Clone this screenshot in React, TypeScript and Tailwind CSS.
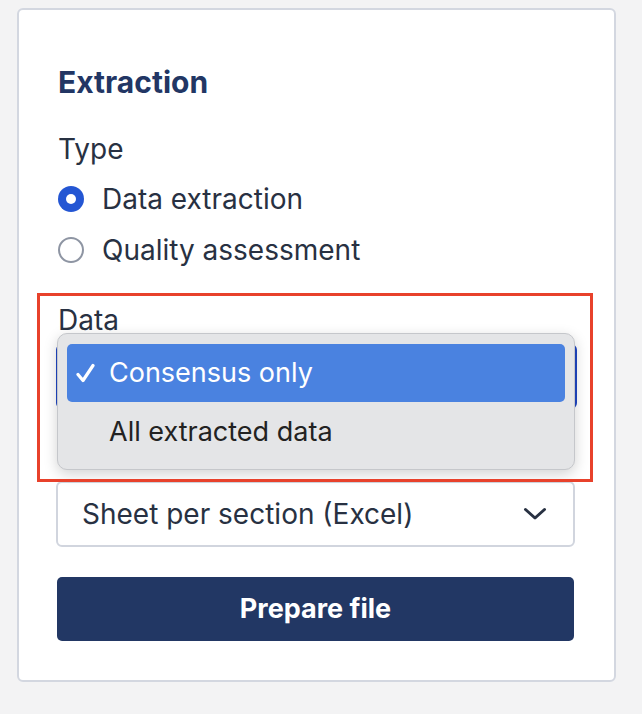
const font = { fontFamily: "Inter, 'Noto Sans', sans-serif" };

function Radio({ checked, label }: { checked?: boolean; label: string }) {
  return (
    <label className="flex items-center gap-[18px] h-[51px]">
      {checked ? (
        <span className="w-[26px] h-[26px] rounded-full bg-[#2456d3] flex items-center justify-center shrink-0">
          <span className="w-[10px] h-[10px] rounded-full bg-white" />
        </span>
      ) : (
        <span className="w-[26px] h-[26px] rounded-full border-2 border-[#8e95a3] bg-white shrink-0" />
      )}
      <span className="text-[28px] text-[#283142]">{label}</span>
    </label>
  );
}

export default function App() {
  return (
    <div className="min-h-[714px] bg-[#f3f3f4] pt-[8px] pl-[17px]" style={font}>
      <div className="w-[599px] h-[674px] bg-white border-2 border-[#d3d7e0] rounded-[6px] px-[39px] pt-[52px]">
        <h2 className="text-[30px] font-bold text-[#223664] leading-[40px]">Extraction</h2>

        <div className="mt-[29px] text-[28px] text-[#283142] leading-[36px]">Type</div>
        <div className="mt-[6px] flex flex-col">
          <Radio checked label="Data extraction" />
          <Radio label="Quality assessment" />
        </div>

        {/* Data section with dropdown open */}
        <div className="relative mt-[27px]">
          {/* red annotation box */}
          <div className="absolute left-[-21px] top-[-9px] w-[556px] h-[189px] border-[3px] border-[#e8412b] pointer-events-none z-20" />

          <div className="text-[28px] text-[#283142] leading-[36px]">Data</div>
          <div className="mt-[6px] h-[65px] w-[521px] -ml-[2px] rounded-[6px] border-[3px] border-[#1f46c2] bg-white" />
          <div className="h-[72px]" />

          {/* native-style popup */}
          <div className="absolute left-[-1px] top-[31px] w-[518px] h-[137px] rounded-[10px] bg-[#e4e5e7] border border-[#c5c7cb] shadow-[0_4px_14px_rgba(0,0,0,0.18)] z-10 px-[9px] pt-[10px]">
            <div className="h-[58px] rounded-[5px] bg-[#4a82e0] flex items-center pl-[9px] text-white text-[27px]">
              <svg className="w-[19px] h-[20px] mr-[14px] shrink-0" viewBox="0 0 19 20" fill="none">
                <path d="M2 11.5 L7 17.5 L17 2.5" stroke="white" strokeWidth="3.2" strokeLinecap="round" strokeLinejoin="round" />
              </svg>
              <span>Consensus only</span>
            </div>
            <div className="h-[60px] flex items-center pl-[42px] text-[27px] text-[#222222]">
              All extracted data
            </div>
          </div>
        </div>

        <div className="h-[66px] w-[519px] -ml-[2px] rounded-[6px] border-2 border-[#d1d5de] bg-white flex items-center justify-between pl-[24px] pr-[26px] text-[28px] text-[#283142]">
          <span>Sheet per section (Excel)</span>
          <svg className="w-[24px] h-[14px]" viewBox="0 0 24 14" fill="none">
            <path d="M2.5 2.5 L12 11 L21.5 2.5" stroke="#283142" strokeWidth="3" strokeLinecap="round" strokeLinejoin="round" />
          </svg>
        </div>

        <button className="mt-[30px] w-[517px] h-[64px] -ml-[1px] rounded-[5px] bg-[#223764] text-white text-[27px] font-bold">
          Prepare file
        </button>
      </div>
    </div>
  );
}
